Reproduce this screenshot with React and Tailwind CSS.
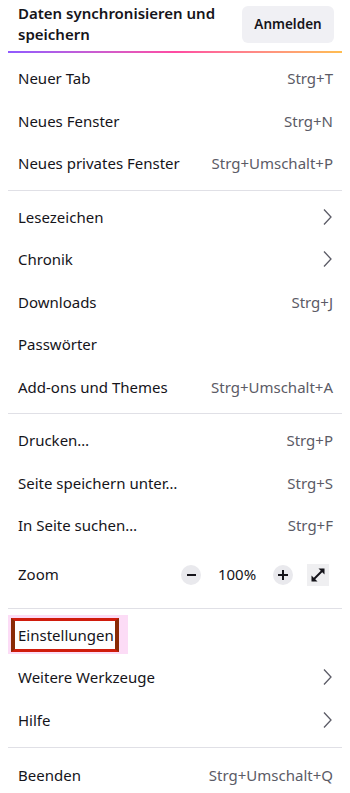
import React from "react";

const Chevron = () => (
  <svg width="12" height="18" viewBox="0 0 12 18" fill="none" className="text-[#5b5b66]">
    <path d="M3 1.5 L10 9 L3 16.5" stroke="currentColor" strokeWidth="1.3" />
  </svg>
);

const Row = ({ label, shortcut, chevron }) => (
  <div className="flex h-[42.5px] items-center justify-between pl-[18px] pr-[17px]">
    <span className="text-[15px] text-[#15141a]">{label}</span>
    {shortcut && <span className="text-[15px] text-[#5b5b66]">{shortcut}</span>}
    {chevron && <Chevron />}
  </div>
);

const Sep = () => <div className="mx-[8px] my-[5px] h-px bg-[#e0e0e6]" />;

export default function App() {
  return (
    <div className="w-[350px] h-[793px] overflow-hidden bg-white" style={{ fontFamily: '"Noto Sans", "Open Sans", sans-serif' }}>
      <div className="flex items-center justify-between pl-[18px] pr-[16px] pt-[3px]">
        <div className="text-[15px] font-semibold leading-[21px] text-[#15141a]">
          Daten synchronisieren und
          <br />
          speichern
        </div>
        <button className="h-[37px] w-[92px] rounded-[6px] bg-[#f0f0f4] text-[13.5px] font-semibold text-[#15141a]">
          Anmelden
        </button>
      </div>
      <div className="mx-[8px] mt-[6px] h-[2px] bg-gradient-to-r from-[#9059ff] via-[#ff4aa2] to-[#ffbd4f]" />
      <div className="h-[4px]" />
      <Row label="Neuer Tab" shortcut="Strg+T" />
      <Row label="Neues Fenster" shortcut="Strg+N" />
      <Row label="Neues privates Fenster" shortcut="Strg+Umschalt+P" />
      <Sep />
      <Row label="Lesezeichen" chevron />
      <Row label="Chronik" chevron />
      <Row label="Downloads" shortcut="Strg+J" />
      <Row label="Passwörter" />
      <Row label="Add-ons und Themes" shortcut="Strg+Umschalt+A" />
      <Sep />
      <Row label="Drucken…" shortcut="Strg+P" />
      <Row label="Seite speichern unter…" shortcut="Strg+S" />
      <Row label="In Seite suchen…" shortcut="Strg+F" />
      <div className="flex h-[56px] items-center justify-between pl-[18px] pr-[21px]">
        <span className="text-[15px] text-[#15141a]">Zoom</span>
        <div className="flex items-center">
          <div className="flex h-[20px] w-[20px] items-center justify-center rounded-full bg-[#e9e9ed]">
            <div className="h-[2px] w-[9px] bg-[#15141a]" />
          </div>
          <span className="mx-[8px] w-[56px] text-center text-[15px] text-[#15141a]">100%</span>
          <div className="relative flex h-[20px] w-[20px] items-center justify-center rounded-full bg-[#e9e9ed]">
            <div className="h-[2px] w-[10px] bg-[#15141a]" />
            <div className="absolute h-[10px] w-[2px] bg-[#15141a]" />
          </div>
          <div className="ml-[14px] flex h-[22px] w-[22px] items-center justify-center bg-[#efeff1]">
            <svg width="16" height="16" viewBox="0 0 16 16" fill="#15141a">
              <path d="M2.5 13.5 L13.5 2.5" stroke="#15141a" strokeWidth="2" />
              <path d="M8.5 1.5 H14.5 V7.5 Z" />
              <path d="M1.5 8.5 V14.5 H7.5 Z" />
            </svg>
          </div>
        </div>
      </div>
      <Sep />
      <div className="flex h-[42.5px] items-center">
        <div className="ml-[8px] flex h-[39px] w-[120px] items-center bg-[#fcdcf6] pl-[3px]">
          <div className="flex h-[34px] w-[108px] items-center border-y-[3px] border-x-[4px] border-y-[#d01c0c] border-x-[#8a2a05] bg-white pl-[3px]">
            <span className="text-[15px] text-[#15141a]">Einstellungen</span>
          </div>
        </div>
      </div>
      <Row label="Weitere Werkzeuge" chevron />
      <Row label="Hilfe" chevron />
      <div className="mx-[8px] mb-[6px] mt-[5.5px] h-px bg-[#e0e0e6]" />
      <Row label="Beenden" shortcut="Strg+Umschalt+Q" />
    </div>
  );
}
